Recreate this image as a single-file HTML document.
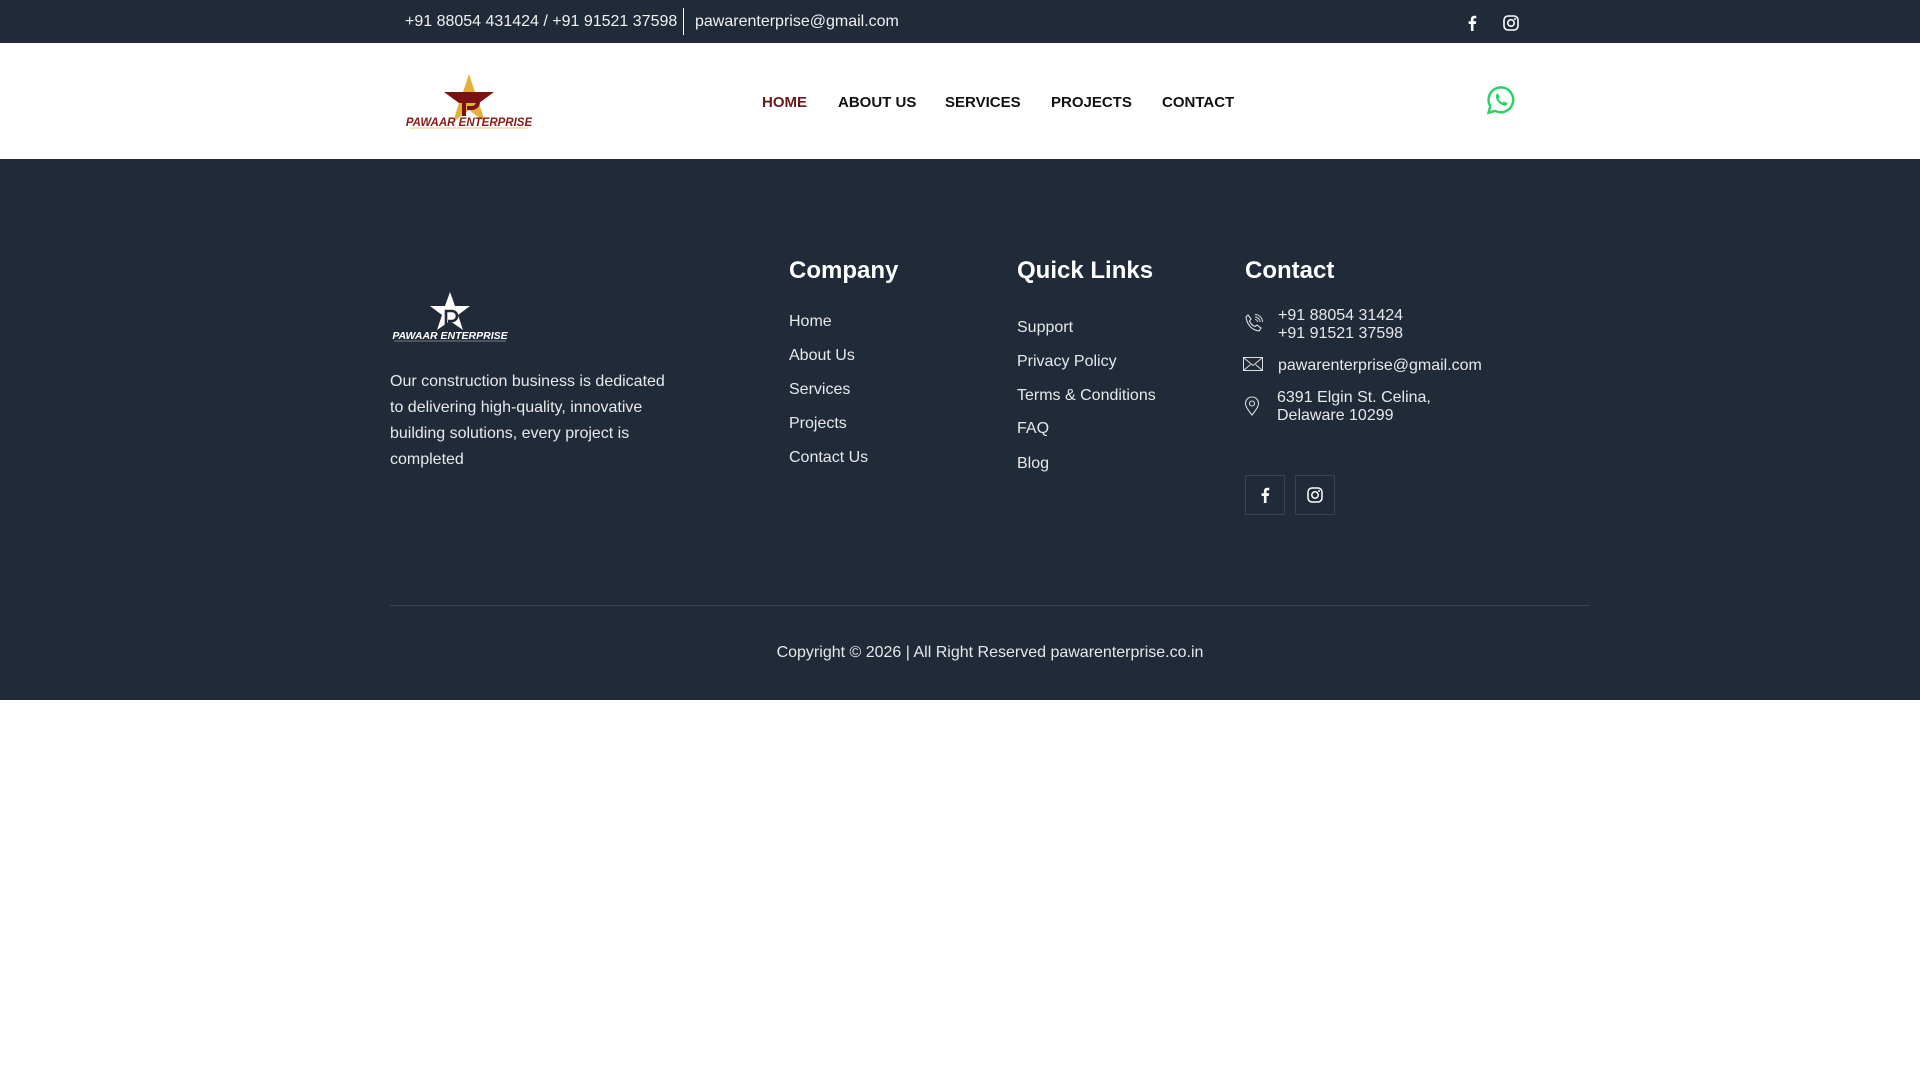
<!DOCTYPE html>
<html><head><meta charset="utf-8"><style>
*{margin:0;padding:0;box-sizing:border-box}
body{width:1920px;height:1080px;background:#fff;font-family:"Liberation Sans",Arial,sans-serif;position:relative;overflow:hidden}
.a{position:absolute;white-space:nowrap}
.top{position:absolute;left:0;top:0;width:1920px;height:43px;background:#212a39}
.hdr{position:absolute;left:0;top:43px;width:1920px;height:116px;background:#fff}
.ft{position:absolute;left:0;top:159px;width:1920px;height:541px;background:#212a39}
.nav{font-weight:bold;font-size:15px;color:#111;top:94px}
.w{color:#e8e8ea;font-size:16px}
.h{color:#fff;font-weight:bold;font-size:24px;top:257px}
.box{position:absolute;width:40px;height:40px;border:1px solid #3b4455;top:475px;display:flex;align-items:center;justify-content:center}
</style></head><body>
<div class="top"></div>
<div class="a w" style="left:405px;top:13px;color:#f0f0f0">+91 88054 431424 / +91 91521 37598</div>
<div class="a" style="left:683px;top:8px;width:1px;height:27px;background:#fff"></div>
<div class="a w" style="left:695px;top:13px;color:#f0f0f0">pawarenterprise@gmail.com</div>
<svg class="a" style="left:1465px;top:15px" width="14" height="16" viewBox="0 0 10 16"><path d="M6.5 16V9h2.3l.4-2.7H6.5V4.6c0-.8.3-1.3 1.4-1.3h1.4V.9C9 .8 8.2.7 7.3.7 5.3.7 3.9 1.9 3.9 4.2v2.1H1.6V9h2.3v7z" fill="#fff"/></svg>
<svg class="a" style="left:1503px;top:15px" width="16" height="16" viewBox="0 0 16 16"><rect x="1" y="1" width="14" height="14" rx="4" fill="none" stroke="#fff" stroke-width="1.6"/><circle cx="8" cy="8" r="3.2" fill="none" stroke="#fff" stroke-width="1.6"/><circle cx="12" cy="4" r="1" fill="#fff"/></svg>
<div class="hdr"></div>
<svg class="a" style="left:406px;top:72px" width="126" height="58" viewBox="0 0 126 58">
<polygon points="63,2 69,20 88,20 73,31 79,50 63,38 47,50 53,31 38,20 57,20" fill="#e2b23a"/>
<polygon points="38,20 88,20 73,31 53,31" fill="#7a1414"/>
<path d="M58 44V24h8a6 6 0 0 1 0 12h-5" fill="none" stroke="#7a1414" stroke-width="4"/>
<text x="63" y="54" text-anchor="middle" font-family="Liberation Sans" font-weight="bold" font-style="italic" font-size="11.5" fill="#8a1a1a">PAWAAR ENTERPRISE</text>
<line x1="4" y1="56" x2="122" y2="56" stroke="#e6c97a" stroke-width="1"/>
</svg>
<div class="a nav" style="left:762px;color:#6b1a1a">HOME</div>
<div class="a nav" style="left:838px">ABOUT US</div>
<div class="a nav" style="left:945px">SERVICES</div>
<div class="a nav" style="left:1051px">PROJECTS</div>
<div class="a nav" style="left:1162px">CONTACT</div>
<svg class="a" style="left:1486px;top:85px" width="30" height="30" viewBox="0 0 32 32"><path d="M16 2.5A13.3 13.3 0 0 0 4.6 22.6L2.7 29.5l7.1-1.8A13.3 13.3 0 1 0 16 2.5z" fill="none" stroke="#25d366" stroke-width="2.6"/><path d="M11.5 9.5c.5-.4 1.3-.4 1.6.2l1.3 2.8c.2.5 0 .9-.3 1.2l-.8.9c.9 1.9 2.4 3.4 4.3 4.3l.9-.9c.3-.3.8-.4 1.2-.2l2.7 1.3c.6.3.6 1.1.2 1.6-1.2 1.4-2.8 1.8-4.7 1-3.3-1.4-5.6-3.700-7-7-.7-1.7-.6-3.600.6-5.200z" fill="#25d366"/></svg>
<div class="ft"></div>
<svg class="a" style="left:392px;top:290px" width="116" height="52" viewBox="0 0 116 52">
<polygon points="58,2 63,16 78,16 66,25 71,40 58,31 45,40 50,25 38,16 53,16" fill="#fff"/>
<path d="M54 38V21h6a5 5 0 0 1 0 10h-4" fill="none" stroke="#212a39" stroke-width="2.6"/>
<text x="58" y="49" text-anchor="middle" font-family="Liberation Sans" font-weight="bold" font-style="italic" font-size="10.5" fill="#fff">PAWAAR ENTERPRISE</text>
<line x1="2" y1="51" x2="114" y2="51" stroke="#999" stroke-width="0.7"/>
</svg>
<div class="a w" style="left:390px;top:369px;white-space:normal;width:290px;line-height:26px">Our construction business is dedicated to delivering high-quality, innovative building solutions, every project is completed</div>
<div class="a h" style="left:789px">Company</div>
<div class="a w" style="left:789px;top:313px">Home</div>
<div class="a w" style="left:789px;top:347px">About Us</div>
<div class="a w" style="left:789px;top:381px">Services</div>
<div class="a w" style="left:789px;top:415px">Projects</div>
<div class="a w" style="left:789px;top:449px">Contact Us</div>
<div class="a h" style="left:1017px">Quick Links</div>
<div class="a w" style="left:1017px;top:319px">Support</div>
<div class="a w" style="left:1017px;top:353px">Privacy Policy</div>
<div class="a w" style="left:1017px;top:387px">Terms &amp; Conditions</div>
<div class="a w" style="left:1017px;top:420px">FAQ</div>
<div class="a w" style="left:1017px;top:455px">Blog</div>
<div class="a h" style="left:1245px">Contact</div>
<svg class="a" style="left:1244px;top:313px" width="20" height="20" viewBox="0 0 20 20"><path d="M4 2l3 4-1.5 2c1 2.5 3 4.5 5.5 5.5L13 12l4 3-2 3C8 17 3 12 2 4z" fill="none" stroke="#ddd" stroke-width="1.1"/><path d="M11 4a5 5 0 0 1 5 5M11 1.5a7.5 7.5 0 0 1 7.5 7.5M11 6.5a2.5 2.5 0 0 1 2.5 2.5" fill="none" stroke="#ddd" stroke-width="1"/></svg>
<div class="a w" style="left:1278px;top:307px;line-height:18px">+91 88054 31424<br>+91 91521 37598</div>
<svg class="a" style="left:1243px;top:357px" width="20" height="14" viewBox="0 0 20 14"><rect x="0.5" y="0.5" width="19" height="13" fill="none" stroke="#ddd"/><path d="M.5.5l9.5 8 9.5-8M.5 13.5l7-6M19.5 13.5l-7-6" fill="none" stroke="#ddd"/></svg>
<div class="a w" style="left:1278px;top:357px">pawarenterprise@gmail.com</div>
<svg class="a" style="left:1244px;top:396px" width="16" height="20" viewBox="0 0 16 20"><path d="M8 19C3 13 1.5 10 1.5 7.5a6.5 6.5 0 0 1 13 0C14.5 10 13 13 8 19z" fill="none" stroke="#ddd" stroke-width="1.1"/><circle cx="8" cy="7.5" r="2.5" fill="none" stroke="#ddd" stroke-width="1.1"/></svg>
<div class="a w" style="left:1277px;top:389px;line-height:18px">6391 Elgin St. Celina,<br>Delaware 10299</div>
<div class="box" style="left:1245px"><svg width="10" height="16" viewBox="0 0 10 16"><path d="M6.5 16V9h2.3l.4-2.7H6.5V4.6c0-.8.3-1.3 1.4-1.3h1.4V.9C9 .8 8.2.7 7.3.7 5.3.7 3.9 1.9 3.9 4.2v2.1H1.6V9h2.3v7z" fill="#fff"/></svg></div>
<div class="box" style="left:1295px"><svg width="16" height="16" viewBox="0 0 16 16"><rect x="1" y="1" width="14" height="14" rx="4" fill="none" stroke="#fff" stroke-width="1.5"/><circle cx="8" cy="8" r="3.2" fill="none" stroke="#fff" stroke-width="1.5"/><circle cx="12" cy="4" r="1" fill="#fff"/></svg></div>
<div class="a" style="left:390px;top:605px;width:1200px;height:1px;background:#3a4354"></div>
<div class="a w" style="left:0;width:1980px;text-align:center;top:644px">Copyright © 2026 | All Right Reserved pawarenterprise.co.in</div>
</body></html>
